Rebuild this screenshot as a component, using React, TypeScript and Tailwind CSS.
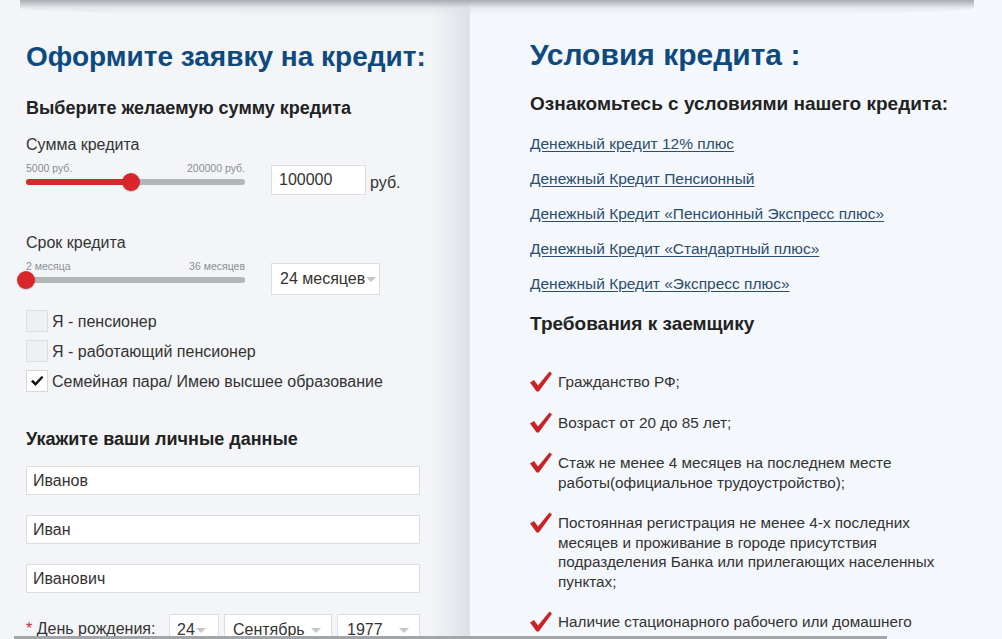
import type { JSX } from 'react';

const links = [
  'Денежный кредит 12% плюс',
  'Денежный Кредит Пенсионный',
  'Денежный Кредит «Пенсионный Экспресс плюс»',
  'Денежный Кредит «Стандартный плюс»',
  'Денежный Кредит «Экспресс плюс»',
];

const requirements = [
  'Гражданство РФ;',
  'Возраст от 20 до 85 лет;',
  'Стаж не менее 4 месяцев на последнем месте работы(официальное трудоустройство);',
  'Постоянная регистрация не менее 4-х последних месяцев и проживание в городе присутствия подразделения Банка или прилегающих населенных пунктах;',
  'Наличие стационарного рабочего или домашнего телефона;',
];

function Caret({ auto }: { auto?: boolean }): JSX.Element {
  return (
    <span
      className={
        auto
          ? 'ml-auto inline-block h-0 w-0 border-x-[5px] border-t-[5px] border-x-transparent border-t-[#c4c7ca]'
          : 'ml-[1px] inline-block h-0 w-0 border-x-[5px] border-t-[5px] border-x-transparent border-t-[#c4c7ca]'
      }
    />
  );
}

function RedCheck(): JSX.Element {
  return (
    <svg width="24" height="22" viewBox="0 0 24 22" className="block">
      <path d="M1 11.5 L5 9 L9 14.5 L20.5 0.5 L23 2.5 L9.8 20.5 L7.6 20.5 Z" fill="#c92327" />
    </svg>
  );
}

function Slider({ min, max, pct }: { min: string; max: string; pct: number }): JSX.Element {
  return (
    <div className="w-[219px]">
      <div className="flex h-[12px] justify-between text-[10.5px] leading-[12px] text-[#8c8f92]">
        <span>{min}</span>
        <span>{max}</span>
      </div>
      <div className="relative mt-[-1px] h-[18px]">
        <div className="absolute left-0 right-0 top-[6px] h-[6px] rounded-full bg-[#b1b6b9]" />
        <div className="absolute left-0 top-[6px] h-[6px] rounded-full bg-[#d42a2a]" style={{ width: `${pct}%` }} />
        <div
          className="absolute top-0 h-[18px] w-[18px] -translate-x-1/2 rounded-full bg-[#d8262a] shadow-[0_1px_1px_rgba(0,0,0,0.2)]"
          style={{ left: `${pct}%` }}
        />
      </div>
    </div>
  );
}

function Check({ label, checked }: { label: string; checked?: boolean }): JSX.Element {
  return (
    <label className="flex h-[22px] items-center gap-[4px]">
      {checked ? (
        <span className="flex h-[22px] w-[22px] items-center justify-center border border-[#d6d8da] bg-white">
          <svg width="14" height="12" viewBox="0 0 14 12">
            <path d="M1 6.5 L3 4.8 L5.5 7.6 L11.8 0.8 L13.4 2.4 L5.5 11 Z" fill="#111" />
          </svg>
        </span>
      ) : (
        <span className="h-[22px] w-[22px] border border-[#dcdee0] bg-[#eef0f2]" />
      )}
      <span className="mt-[2px]">{label}</span>
    </label>
  );
}

export default function App(): JSX.Element {
  return (
    <div className="relative flex h-[639px] w-[1002px] overflow-hidden bg-[#f4f7fb] font-['Liberation_Sans',Arial,sans-serif] text-[16px] text-[#333]">
      <div className="flex w-[470px] shrink-0 bg-[#f3f5f8]">
        <div className="flex-1 pl-[26px] pt-[41px]">
          <h1 className="text-[28px] font-bold leading-[32px] text-[#0e4a7e]">Оформите заявку на кредит:</h1>
          <h2 className="mt-[25px] text-[18px] font-bold leading-[21px] text-[#222]">Выберите желаемую сумму кредита</h2>

          <div className="mt-[17px] leading-[18px]">Сумма кредита</div>
          <div className="mt-[8px] flex items-start">
            <Slider min="5000 руб." max="200000 руб." pct={48} />
            <div className="ml-[26px] mt-[3px] flex h-[30px] w-[95px] items-center border border-[#dcdfe2] bg-white pl-[7px] text-[16px]">
              100000
            </div>
            <span className="ml-[4px] mt-[9px]">руб.</span>
          </div>

          <div className="mt-[39px] leading-[18px]">Срок кредита</div>
          <div className="mt-[8px] flex items-start">
            <Slider min="2 месяца" max="36 месяцев" pct={0} />
            <div className="ml-[26px] mt-[3px] flex h-[32px] w-[109px] items-center whitespace-nowrap border border-[#dcdfe2] bg-white pl-[8px]">
              <span>24 месяцев</span>
              <Caret />
            </div>
          </div>

          <div className="mt-[15px] flex flex-col gap-[8px]">
            <Check label="Я - пенсионер" />
            <Check label="Я - работающий пенсионер" />
            <Check label="Семейная пара/ Имею высшее образование" checked />
          </div>

          <h2 className="mt-[37px] text-[18px] font-bold leading-[21px] text-[#222]">Укажите ваши личные данные</h2>

          <div className="mt-[16px] flex w-[394px] flex-col gap-[20px]">
            {['Иванов', 'Иван', 'Иванович'].map((v) => (
              <div key={v} className="flex h-[29px] items-center border border-[#dcdfe2] bg-white pl-[6px]">
                {v}
              </div>
            ))}
          </div>

          <div className="mt-[21px] flex w-[394px] items-start">
            <span className="mt-[3px] w-[143px] whitespace-nowrap">
              <span className="text-[#d42a2a]">*</span> День рождения:
            </span>
            <div className="flex h-[32px] w-[50px] items-center border border-[#dcdfe2] bg-white pl-[7px]">
              <span>24</span>
              <Caret />
            </div>
            <div className="ml-[5px] flex h-[32px] w-[108px] items-center border border-[#dcdfe2] bg-white pl-[8px] pr-[10px]">
              <span>Сентябрь</span>
              <Caret auto />
            </div>
            <div className="ml-[5px] flex h-[32px] w-[83px] items-center border border-[#dcdfe2] bg-white pl-[9px] pr-[10px]">
              <span>1977</span>
              <Caret auto />
            </div>
          </div>
        </div>
        <div className="w-[40px] shrink-0 bg-gradient-to-r from-[#f3f5f8] to-[#dde1e7]" />
      </div>

      <div className="flex-1 bg-[#f4f7fb] pl-[60px] pt-[38px]">
        <h1 className="text-[30px] font-bold leading-[34px] text-[#0e4a7e]">Условия кредита :</h1>
        <h2 className="mt-[21px] text-[19px] font-bold leading-[22px] text-[#222]">Ознакомьтесь с условиями нашего кредита:</h2>
        <ul className="mt-[20px] flex flex-col gap-[17px] text-[15.5px] leading-[18px]">
          {links.map((l) => (
            <li key={l}>
              <a href="#" className="text-[#2b4d6e] underline underline-offset-2">
                {l}
              </a>
            </li>
          ))}
        </ul>
        <h2 className="mt-[20px] text-[19px] font-bold leading-[22px] text-[#222]">Требования к заемщику</h2>
        <ul className="mt-[37px] flex flex-col gap-[21px] text-[15.3px] leading-[19.5px]">
          {requirements.map((r) => (
            <li key={r} className="flex items-start gap-[5px]">
              <span className="-ml-[1px] h-[19.5px] shrink-0">
                <span className="-mt-[1px] block">
                  <RedCheck />
                </span>
              </span>
              <span className="w-[388px]">{r}</span>
            </li>
          ))}
        </ul>
      </div>

      <div className="pointer-events-none absolute left-[20px] right-[28px] top-0 h-[16px] rounded-b-[50%] bg-gradient-to-b from-[#a9adb2] via-[#dfe2e6]/60 to-transparent" />
      <div className="pointer-events-none absolute bottom-0 left-[14px] right-[115px] h-[3px] bg-[#a3a6a9]" />
    </div>
  );
}
